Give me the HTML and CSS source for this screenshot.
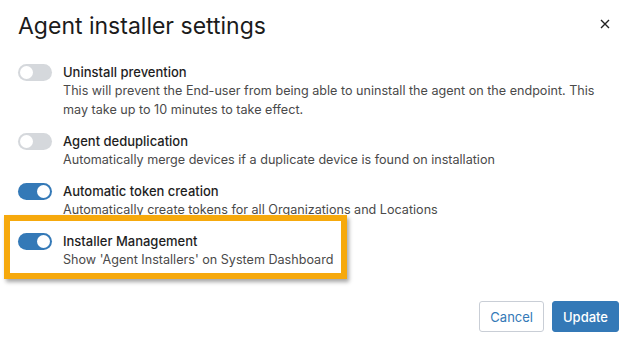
FILE: index.html
```html
<!DOCTYPE html>
<html lang="en">
  <head>
    <meta charset="UTF-8" />
    <meta name="viewport" content="width=device-width, initial-scale=1.0" />
    <title>Agent installer settings</title>
    <link rel="stylesheet" href="styles.css">
  </head>
  <body>
    <div class="modal">
      <div class="modal-header">
        <h2 class="modal-title">Agent installer settings</h2>
        <button class="close-btn" aria-label="Close">
          <svg width="10" height="10" viewBox="0 0 10 10">
            <path d="M1 1 L9 9 M9 1 L1 9" stroke="#222" stroke-width="1.4" fill="none" />
          </svg>
        </button>
      </div>

      <div class="settings">
        <div class="setting">
          <span class="toggle"></span>
          <div class="setting-text">
            <div class="setting-label">Uninstall prevention</div>
            <div class="setting-desc">This will prevent the End-user from being able to uninstall the agent on the endpoint. This may take up to 10 minutes to take effect.</div>
          </div>
        </div>
        <div class="setting">
          <span class="toggle"></span>
          <div class="setting-text">
            <div class="setting-label">Agent deduplication</div>
            <div class="setting-desc">Automatically merge devices if a duplicate device is found on installation</div>
          </div>
        </div>
        <div class="setting">
          <span class="toggle on"></span>
          <div class="setting-text">
            <div class="setting-label">Automatic token creation</div>
            <div class="setting-desc">Automatically create tokens for all Organizations and Locations</div>
          </div>
        </div>
        <div class="setting highlight">
          <span class="toggle on"></span>
          <div class="setting-text">
            <div class="setting-label">Installer Management</div>
            <div class="setting-desc">Show 'Agent Installers' on System Dashboard</div>
          </div>
        </div>
      </div>

      <div class="modal-footer">
        <button class="btn btn-default">Cancel</button>
        <button class="btn btn-primary">Update</button>
      </div>
    </div>
  </body>
</html>
```

FILE: styles.css
```css
body {
  font-family: Inter, "Noto Sans", sans-serif;
  margin: 0;
  padding: 0;
  background-color: #ffffff;
  color: #222222;
}

.modal {
  width: 634px;
  height: 344px;
  display: flex;
  flex-direction: column;
}

.modal-header {
  display: flex;
  justify-content: space-between;
  align-items: flex-start;
  padding: 12px 24px 0 18px;
}

.modal-title {
  margin: 0;
  font-size: 23px;
  font-weight: 400;
  line-height: 28px;
  color: #1b1b1b;
}

.close-btn {
  border: none;
  background: none;
  padding: 0;
  margin-top: 5px;
  cursor: pointer;
}

.settings {
  display: flex;
  flex-direction: column;
  gap: 13px;
  padding: 23px 18px 0 18px;
}

.setting {
  display: flex;
  align-items: flex-start;
}

.toggle {
  flex: none;
  position: relative;
  width: 34px;
  height: 17px;
  border-radius: 9px;
  background-color: #d5d8dc;
  margin-top: 1px;
  margin-right: 11px;
}

/* knob */
.toggle:after {
  content: "";
  position: absolute;
  left: 2px;
  top: 2px;
  width: 13px;
  height: 13px;
  border-radius: 50%;
  background-color: #ffffff;
}

.toggle.on {
  background-color: #3479b7;
}

.toggle.on:after {
  left: 19px;
}

.setting-label {
  font-size: 13px;
  font-weight: 500;
  line-height: 18px;
  color: #1e1e1e;
}

.setting-desc {
  font-size: 12.6px;
  line-height: 19px;
  color: #4a4a4a;
}

/* orange callout box around the last setting */
.highlight {
  position: relative;
  align-self: flex-start;
}

.highlight:after {
  content: "";
  position: absolute;
  left: -14px;
  top: -17px;
  right: -14px;
  bottom: -10px;
  border: 6px solid #f6a90d;
  box-shadow: 2px 3px 4px rgba(0, 0, 0, 0.35);
  pointer-events: none;
}

.modal-footer {
  margin-top: auto;
  display: flex;
  justify-content: flex-end;
  gap: 8px;
  padding: 0 15px 12px 0;
}

.btn {
  font-family: Inter, "Noto Sans", sans-serif;
  font-size: 13px;
  height: 31px;
  padding: 0 10px;
  border-radius: 3px;
  cursor: pointer;
}

.btn-default {
  background-color: #ffffff;
  border: 1px solid #c9ced6;
  color: #3479b7;
}

.btn-primary {
  background-color: #3479b7;
  border: 1px solid #3479b7;
  color: #ffffff;
  font-weight: 500;
}
```
